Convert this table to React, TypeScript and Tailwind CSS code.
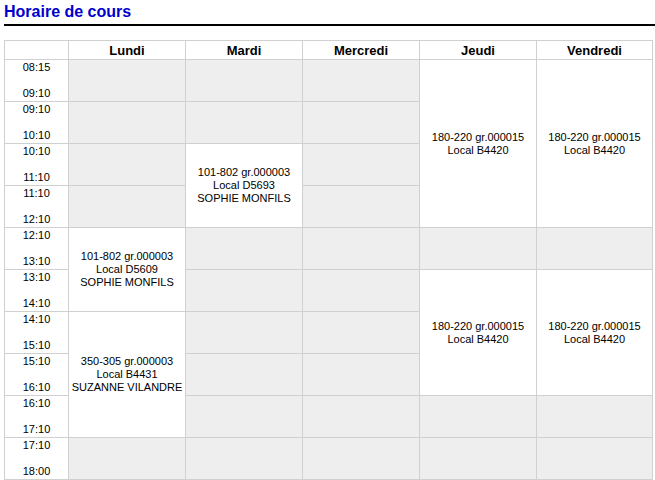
import React from "react";

const times: [string, string][] = [
  ["08:15", "09:10"],
  ["09:10", "10:10"],
  ["10:10", "11:10"],
  ["11:10", "12:10"],
  ["12:10", "13:10"],
  ["13:10", "14:10"],
  ["14:10", "15:10"],
  ["15:10", "16:10"],
  ["16:10", "17:10"],
  ["17:10", "18:00"],
];

const days = ["Lundi", "Mardi", "Mercredi", "Jeudi", "Vendredi"];

const colClass = ["col-start-1", "col-start-2", "col-start-3", "col-start-4", "col-start-5", "col-start-6"];
const rowClass = [
  "row-start-1",
  "row-start-2",
  "row-start-3",
  "row-start-4",
  "row-start-5",
  "row-start-6",
  "row-start-7",
  "row-start-8",
  "row-start-9",
  "row-start-10",
  "row-start-11",
];
const spanClass: Record<number, string> = { 1: "row-span-1", 2: "row-span-2", 3: "row-span-3", 4: "row-span-4" };

type Course = { day: number; start: number; span: number; lines: string[] };

const courses: Course[] = [
  { day: 0, start: 4, span: 2, lines: ["101-802 gr.000003", "Local D5609", "SOPHIE MONFILS"] },
  { day: 0, start: 6, span: 3, lines: ["350-305 gr.000003", "Local B4431", "SUZANNE VILANDRE"] },
  { day: 1, start: 2, span: 2, lines: ["101-802 gr.000003", "Local D5693", "SOPHIE MONFILS"] },
  { day: 3, start: 0, span: 4, lines: ["180-220 gr.000015", "Local B4420"] },
  { day: 4, start: 0, span: 4, lines: ["180-220 gr.000015", "Local B4420"] },
  { day: 3, start: 5, span: 3, lines: ["180-220 gr.000015", "Local B4420"] },
  { day: 4, start: 5, span: 3, lines: ["180-220 gr.000015", "Local B4420"] },
];

function covered(day: number, row: number) {
  return courses.some((c) => c.day === day && row >= c.start && row < c.start + c.span);
}

export default function App() {
  const cells: React.ReactNode[] = [];
  cells.push(<div key="h0" className="bg-white col-start-1 row-start-1" />);
  days.forEach((d, i) => {
    cells.push(
      <div
        key={"h" + d}
        className={`${colClass[i + 1]} row-start-1 bg-white flex items-center justify-center text-[13px] font-bold leading-[15px] text-black`}
      >
        {d}
      </div>
    );
  });
  times.forEach((t, r) => {
    cells.push(
      <div
        key={"t" + r}
        className={`col-start-1 ${rowClass[r + 1]} bg-white flex flex-col items-center justify-center text-[11px] leading-[13px] text-black`}
      >
        <span>{t[0]}</span>
        <span>&nbsp;</span>
        <span>{t[1]}</span>
      </div>
    );
    days.forEach((_, d) => {
      if (!covered(d, r)) {
        cells.push(<div key={"e" + r + "-" + d} className={`${colClass[d + 1]} ${rowClass[r + 1]} bg-[#eeeeee]`} />);
      }
    });
  });
  courses.forEach((c, i) => {
    cells.push(
      <div
        key={"c" + i}
        className={`${colClass[c.day + 1]} ${rowClass[c.start + 1]} ${spanClass[c.span]} bg-white flex flex-col items-center justify-center text-center text-[11px] leading-[13px] text-black`}
      >
        {c.lines.map((l, j) => (
          <span key={j}>{l}</span>
        ))}
      </div>
    );
  });

  return (
    <div className="w-[655px] h-[480px] overflow-hidden bg-white pl-[4px] font-['Liberation_Sans',Arial,sans-serif]">
      <div className="h-[24px] pt-[2px] text-[16px] font-bold leading-[19px] text-[#0000cc]">Horaire de cours</div>
      <div className="h-[2px] bg-black" />
      <div className="h-[14px]" />
      <div className="grid w-[649px] grid-cols-[63px_116px_116px_116px_116px_115px] grid-rows-[18px_repeat(10,41px)] gap-px bg-[#d0d0d0] p-px">
        {cells}
      </div>
    </div>
  );
}
